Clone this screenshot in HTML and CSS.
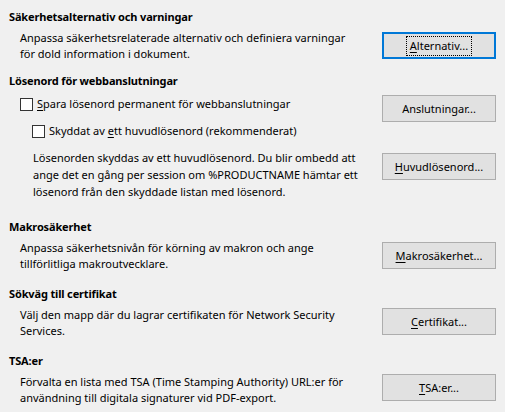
FILE: index.html
```html
<!DOCTYPE html>
<html lang="sv">
<head>
<meta charset="utf-8">
<title>Säkerhet</title>
<link rel="stylesheet" href="styles.css">
</head>
<body>
<div class="page">
  <section class="sec sec-first">
    <h2 class="head">Säkerhetsalternativ och varningar</h2>
    <div class="row">
      <p class="desc">Anpassa säkerhetsrelaterade alternativ och definiera varningar<br>för dold information i dokument.</p>
      <button class="btn btn-focus off2"><span class="focus"><u>A</u>lternativ...</span></button>
    </div>
  </section>

  <section class="sec sec-pw">
    <h2 class="head">Lösenord för webbanslutningar</h2>
    <div class="row">
      <div class="left">
        <label class="check"><span class="box"></span><span><u>S</u>para lösenord permanent för webbanslutningar</span></label>
        <label class="check check-sub"><span class="box"></span><span>Skyddat av <u>e</u>tt huvudlösenord (rekommenderat)</span></label>
      </div>
      <button class="btn off1">Anslutningar...</button>
    </div>
    <div class="row row-note">
      <p class="note">Lösenorden skyddas av ett huvudlösenord. Du blir ombedd att<br>ange det en gång per session om %PRODUCTNAME hämtar ett<br>lösenord från den skyddade listan med lösenord.</p>
      <button class="btn off4"><u>H</u>uvudlösenord...</button>
    </div>
  </section>

  <section class="sec sec-macro">
    <h2 class="head">Makrosäkerhet</h2>
    <div class="row">
      <p class="desc">Anpassa säkerhetsnivån för körning av makron och ange<br>tillförlitliga makroutvecklare.</p>
      <button class="btn off2"><u>M</u>akrosäkerhet...</button>
    </div>
  </section>

  <section class="sec sec-next">
    <h2 class="head">Sökväg till certifikat</h2>
    <div class="row">
      <p class="desc">Välj den mapp där du lagrar certifikaten för Network Security<br>Services.</p>
      <button class="btn off1"><u>C</u>ertifikat...</button>
    </div>
  </section>

  <section class="sec sec-next">
    <h2 class="head">TSA:er</h2>
    <div class="row">
      <p class="desc">Förvalta en lista med TSA (Time Stamping Authority) URL:er för<br>användning till digitala signaturer vid PDF-export.</p>
      <button class="btn off0"><u>T</u>SA:er...</button>
    </div>
  </section>
</div>
</body>
</html>
```

FILE: styles.css
```css
html, body {
  margin: 0;
  padding: 0;
  background: #f0f0f0;
}
body {
  font-family: "Noto Sans", "Open Sans", sans-serif;
  font-size: 11px;
  line-height: 16px;
  color: #000;
}
.page {
  padding: 9px 9px 0 9px;
  width: 487px;
}
.sec {
  margin: 0;
}
.sec-pw { margin-top: 11px; }
.sec-macro { margin-top: 19px; }
.sec-next { margin-top: 14px; }
.head {
  margin: 0;
  font-size: 11px;
  line-height: 16px;
  font-weight: 700;
  letter-spacing: -0.15px;
}
.row {
  display: flex;
  justify-content: space-between;
  align-items: flex-start;
  margin-top: 5px;
}
.desc {
  margin: 0 0 0 11px;
}
.left {
  margin-left: 11px;
  margin-top: 2px;
}
.check {
  display: flex;
  align-items: center;
  gap: 4px;
  height: 16px;
}
.check-sub {
  margin-top: 11px;
  margin-left: 12px;
}
.box {
  width: 11px;
  height: 11px;
  border: 1px solid #333;
  background: #fff;
  flex: none;
}
.row-note {
  margin-top: 10px;
}
.note {
  margin: 0 0 0 24px;
  line-height: 17px;
}
.btn {
  width: 114px;
  height: 27px;
  flex: none;
  box-sizing: border-box;
  border: 1px solid #adadad;
  background: #e1e1e1;
  font-family: inherit;
  font-size: 11px;
  color: #000;
  padding: 0;
  margin: 0;
  display: flex;
  align-items: center;
  justify-content: center;
}
.btn-focus {
  border: 2px solid #0078d7;
}
.focus {
  outline: 1px dotted #000;
  outline-offset: 0;
  padding: 1px 3px;
  line-height: 16px;
}
.off0 { margin-top: 0; }
.off1 { margin-top: 1px; }
.off2 { margin-top: 2px; }
.off4 { margin-top: 4px; }
u {
  text-decoration: underline;
  text-underline-offset: 2px;
}
```
